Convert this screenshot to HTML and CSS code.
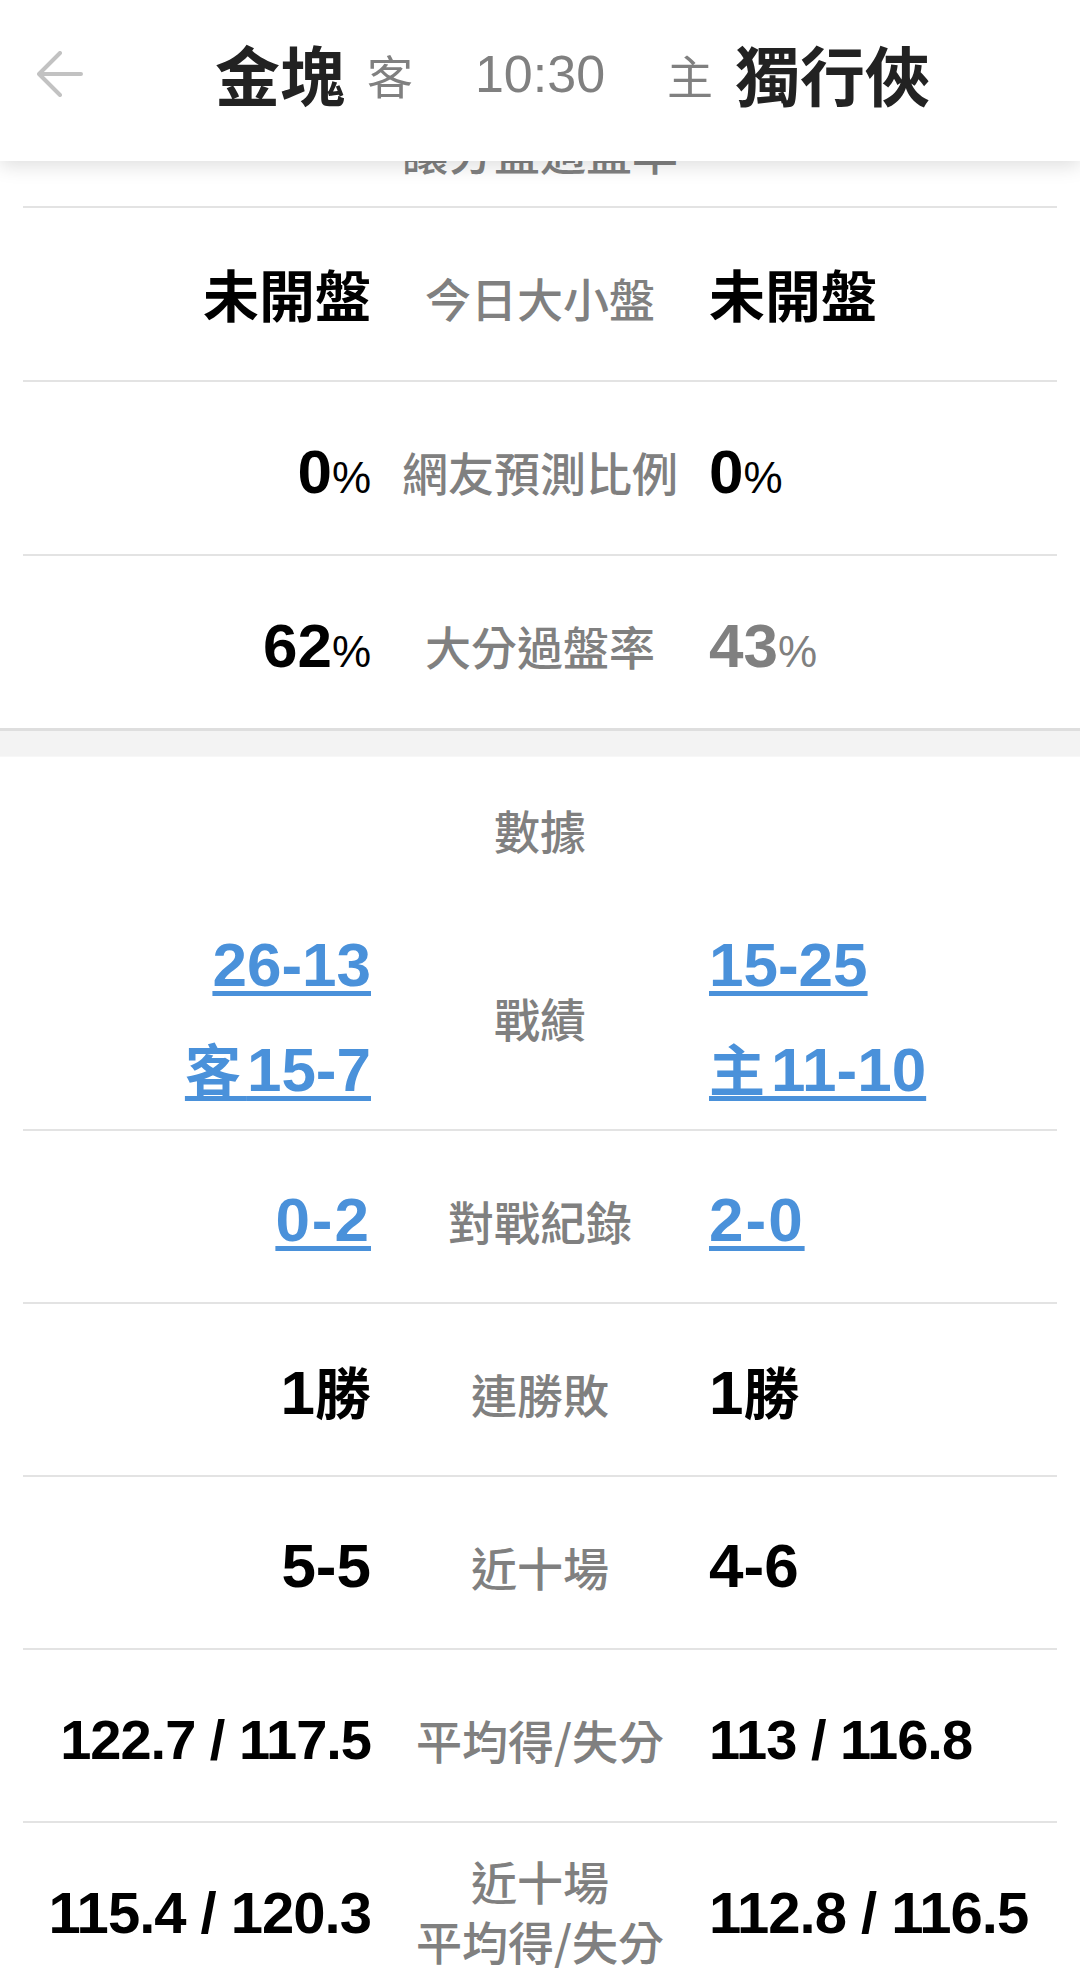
FILE: index.html
```html
<!DOCTYPE html>
<html lang="zh-Hant">
<head>
<meta charset="utf-8">
<title>金塊 vs 獨行俠</title>
<link rel="stylesheet" href="styles.css">
</head>
<body>
<header class="topbar">
  <div class="away">
    <svg class="back" width="46" height="46" viewBox="0 0 46 46" aria-hidden="true">
      <path d="M44 23 H3 M23 2 L2 23 L23 44" fill="none" stroke="#c2c2c2" stroke-width="4" stroke-linecap="round" stroke-linejoin="round"/>
    </svg>
    <div class="side">
      <span class="team">金塊</span><span class="tag">客</span>
    </div>
  </div>
  <div class="time">10:30</div>
  <div class="side home">
    <span class="tag">主</span><span class="team">獨行俠</span>
  </div>
</header>

<main class="content">
  <section class="odds">
    <div class="peek"><span class="label">讓分盤過盤率</span></div>
    <div class="rows">
      <div class="row">
        <div class="val val-l cjk">未開盤</div>
        <div class="label">今日大小盤</div>
        <div class="val val-r cjk">未開盤</div>
      </div>
      <div class="row">
        <div class="val val-l">0<span class="pct">%</span></div>
        <div class="label">網友預測比例</div>
        <div class="val val-r">0<span class="pct">%</span></div>
      </div>
      <div class="row">
        <div class="val val-l">62<span class="pct">%</span></div>
        <div class="label">大分過盤率</div>
        <div class="val val-r muted">43<span class="pct">%</span></div>
      </div>
    </div>
  </section>

  <div class="band"></div>

  <section class="data">
    <div class="title label">數據</div>
    <div class="rows">
      <div class="row row-tall">
        <div class="links links-l">
          <a class="link" href="#">26-13</a>
          <a class="link" href="#"><span class="unit">客</span>15-7</a>
        </div>
        <div class="label">戰績</div>
        <div class="links links-r">
          <a class="link" href="#">15-25</a>
          <a class="link" href="#"><span class="unit">主</span>11-10</a>
        </div>
      </div>
      <div class="row">
        <div class="links links-l"><a class="link single" href="#">0-2</a></div>
        <div class="label">對戰紀錄</div>
        <div class="links links-r"><a class="link single" href="#">2-0</a></div>
      </div>
      <div class="row">
        <div class="val val-l">1<span class="unit">勝</span></div>
        <div class="label">連勝敗</div>
        <div class="val val-r">1<span class="unit">勝</span></div>
      </div>
      <div class="row">
        <div class="val val-l">5-5</div>
        <div class="label">近十場</div>
        <div class="val val-r">4-6</div>
      </div>
      <div class="row">
        <div class="val val-l long">122.7 / 117.5</div>
        <div class="label">平均得/失分</div>
        <div class="val val-r long">113 / 116.8</div>
      </div>
      <div class="row">
        <div class="val val-l long longer">115.4 / 120.3</div>
        <div class="label two-line">近十場<br>平均得/失分</div>
        <div class="val val-r long longer">112.8 / 116.5</div>
      </div>
    </div>
  </section>
</main>
</body>
</html>
```

FILE: styles.css
```css
* {
  box-sizing: border-box;
}

html,
body {
  margin: 0;
  padding: 0;
}

body {
  width: 1080px;
  background: #ffffff;
  color: #000000;
  font-family: "Liberation Sans", "Noto Sans CJK TC", sans-serif;
  overflow: hidden;
}

/* ---------- header ---------- */
.topbar {
  position: fixed;
  top: 0;
  left: 0;
  width: 1080px;
  height: 161px;
  background: #ffffff;
  box-shadow: 0 5px 18px rgba(0, 0, 0, 0.13);
  z-index: 10;
  display: grid;
  grid-template-columns: 1fr auto 1fr;
  column-gap: 62px;
  align-items: center;
  padding-bottom: 14px;
}

.away {
  display: flex;
  align-items: center;
  justify-content: space-between;
  padding-left: 37px;
}

.back {
  display: block;
}

.side {
  display: flex;
  align-items: center;
  gap: 22px;
}

.team {
  font-family: "Noto Sans CJK TC", sans-serif;
  font-weight: 700;
  font-size: 65px;
  line-height: 1;
  color: #222222;
}

.tag {
  font-family: "Noto Sans CJK TC", sans-serif;
  font-size: 46px;
  line-height: 1;
  color: #808080;
}

.time {
  font-family: "Liberation Sans", sans-serif;
  font-size: 52px;
  line-height: 1;
  color: #808080;
}

/* ---------- sections ---------- */
.odds {
  border-bottom: 3px solid #dedede;
}

.peek {
  height: 206px;
  margin: 0 23px;
  display: flex;
  align-items: flex-end;
  justify-content: center;
  padding-bottom: 33px;
}

.peek .label {
  line-height: 1;
}

.band {
  height: 26px;
  background: #f3f3f3;
  border-bottom: 1px solid #f7f7f7;
}

.title {
  height: 150px;
  display: flex;
  align-items: center;
  justify-content: center;
  padding-bottom: 4px;
}

.rows {
  margin: 0 23px;
}

.row {
  display: grid;
  grid-template-columns: 1fr 338px 1fr;
  align-items: center;
  border-top: 2px solid #e3e3e3;
  padding-top: 8px;
}

.odds .row {
  height: 174px;
}

.data .row {
  height: 173px;
}

.data .row-tall {
  height: 222px;
  border-top: 0;
  padding-top: 0;
}

/* ---------- text ---------- */
.label {
  font-family: "Noto Sans CJK TC", sans-serif;
  font-weight: 500;
  font-size: 46px;
  line-height: 1.25;
  color: #808080;
  text-align: center;
  white-space: nowrap;
}

.label.two-line {
  line-height: 60px;
  padding-bottom: 6px;
}

.val {
  font-size: 62px;
  font-weight: 700;
  line-height: 1.2;
  white-space: nowrap;
}

.val-l {
  text-align: right;
}

.val-r {
  text-align: left;
}

.val.cjk {
  font-size: 56px;
}

.val.long {
  font-size: 56px;
  letter-spacing: -1px;
}

.val.longer {
  font-size: 58px;
}

.pct {
  font-size: 44px;
  font-weight: 400;
}

.unit {
  font-size: 56px;
}

.muted {
  color: #808080;
}

.links {
  display: flex;
  flex-direction: column;
}

.links-l {
  align-items: flex-end;
}

.links-r {
  align-items: flex-start;
}

.link {
  color: #4a91da;
  font-size: 62px;
  font-weight: 700;
  line-height: 105px;
  white-space: nowrap;
  text-decoration: underline;
  text-decoration-thickness: 5px;
  text-underline-offset: 5px;
}

.link .unit {
  letter-spacing: 6px;
}

.link.single {
  line-height: 1.2;
  letter-spacing: 2px;
}
```
